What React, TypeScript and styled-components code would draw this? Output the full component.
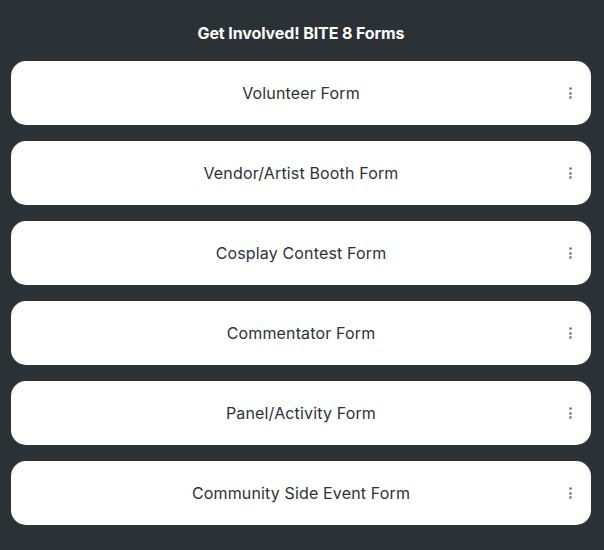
import styled, { createGlobalStyle } from "styled-components";

const GlobalStyle = createGlobalStyle`
  html, body {
    margin: 0;
    padding: 0;
    background: #2b3134;
  }
  body {
    font-family: Inter, "Liberation Sans", sans-serif;
  }
`;

const Page = styled.div`
  display: flex;
  flex-direction: column;
  padding: 0 13px 0 11px;
  min-height: 550px;
  box-sizing: border-box;
`;

const Title = styled.h1`
  margin: 0;
  height: 61px;
  display: flex;
  align-items: center;
  justify-content: center;
  padding-top: 5px;
  box-sizing: border-box;
  font-size: 16px;
  font-weight: 700;
  color: #ffffff;
  letter-spacing: -0.1px;
`;

const List = styled.div`
  display: flex;
  flex-direction: column;
  gap: 16px;
`;

const Card = styled.a`
  position: relative;
  display: flex;
  align-items: center;
  justify-content: center;
  height: 64px;
  background: #ffffff;
  border-radius: 15px;
  color: #2e3235;
  font-size: 16px;
  font-weight: 400;
  letter-spacing: 0.15px;
  text-decoration: none;
  cursor: pointer;
`;

const Menu = styled.span`
  position: absolute;
  right: 19px;
  top: 50%;
  transform: translateY(-50%);
  display: flex;
  flex-direction: column;
  gap: 1.5px;
`;

const Dot = styled.span`
  width: 3px;
  height: 3px;
  border-radius: 50%;
  background: #8a8d90;
`;

const forms = [
  "Volunteer Form",
  "Vendor/Artist Booth Form",
  "Cosplay Contest Form",
  "Commentator Form",
  "Panel/Activity Form",
  "Community Side Event Form",
];

export default function App() {
  return (
    <>
      <GlobalStyle />
      <Page>
        <Title>Get Involved! BITE 8 Forms</Title>
        <List>
          {forms.map((name) => (
            <Card key={name}>
              {name}
              <Menu>
                <Dot />
                <Dot />
                <Dot />
              </Menu>
            </Card>
          ))}
        </List>
      </Page>
    </>
  );
}
